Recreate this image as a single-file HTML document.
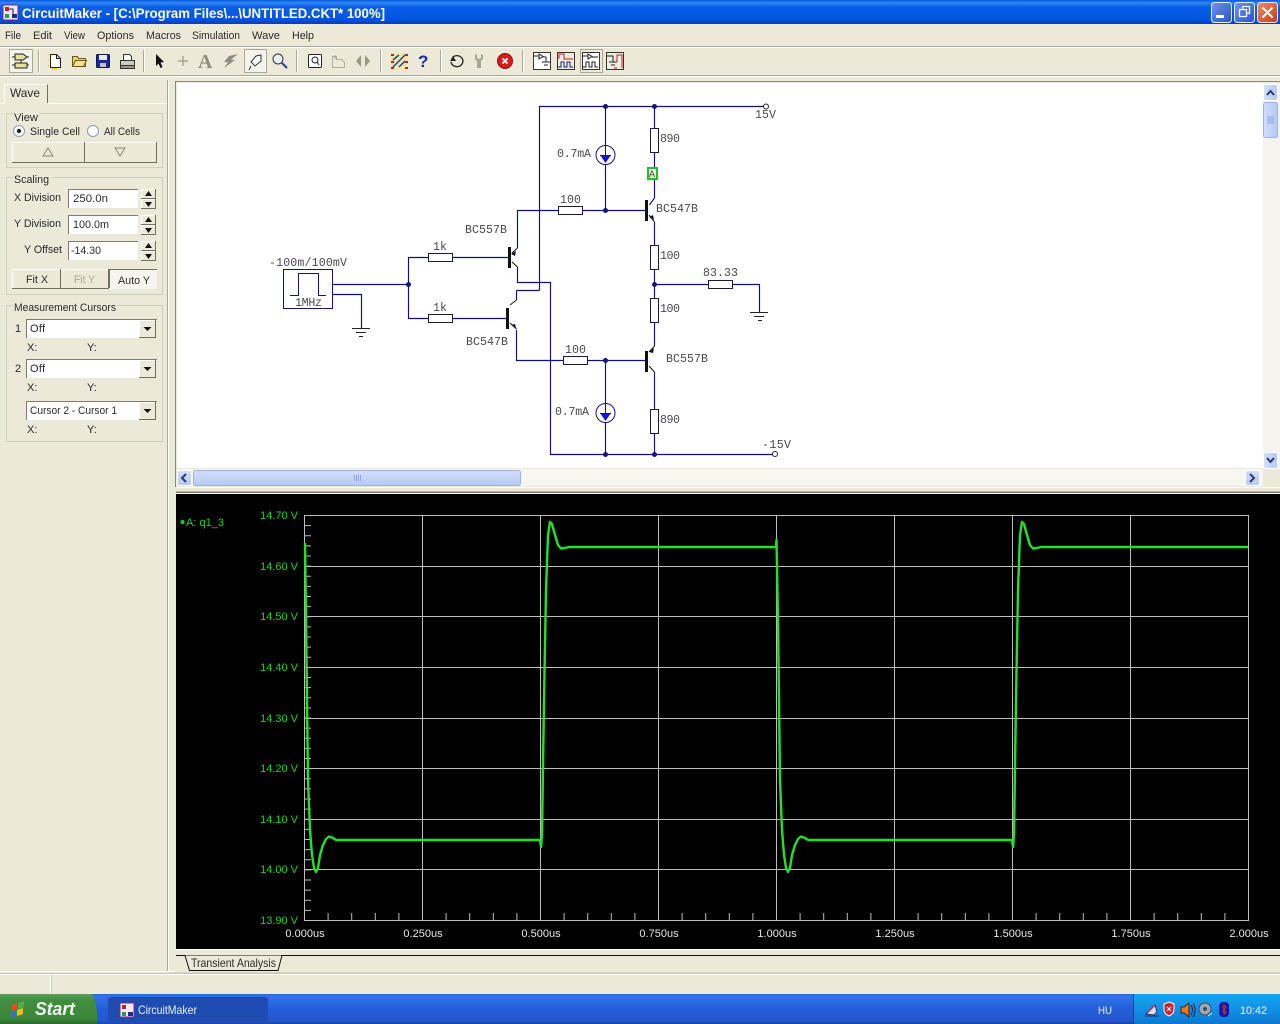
<!DOCTYPE html>
<html><head><meta charset="utf-8"><title>CircuitMaker</title>
<style>
html,body{margin:0;padding:0;background:#ece9d8;overflow:hidden}
svg{display:block;position:absolute;left:0;top:0}
text{font-family:"Liberation Sans",sans-serif;font-size:11px;fill:#2a2a2a}
.m text,text.m{font-family:"Liberation Mono",monospace;font-size:11.6px;fill:#4a4a4a}
.g,.g text{fill:#1fd21f}
.w,.w text{fill:#e8e8e8}
.gb{fill:none;stroke:#d0d0bf}
.wire{fill:none;stroke:#10107a;stroke-width:1.15}
.blk{fill:none;stroke:#111;stroke-width:1}
.grid{fill:none;stroke:#bdbdbd;stroke-width:1}
.res{fill:#fff;stroke:#1a1a3a;stroke-width:1}
.dot{fill:#14147c}
.btn{fill:#ece9d8;stroke:none}
.inp{fill:#fff;stroke:none}
.hi{fill:none;stroke:#fff}
.lo{fill:none;stroke:#716f64}
.sk{fill:none;stroke:#7f7c6e}
</style></head><body>
<svg width="1280" height="1024" viewBox="0 0 1280 1024" xmlns="http://www.w3.org/2000/svg">
<defs>
<linearGradient id="tb" x1="0" y1="0" x2="0" y2="1"><stop offset="0" stop-color="#0a5be0"/><stop offset=".12" stop-color="#2f87f5"/><stop offset=".28" stop-color="#0a5fe6"/><stop offset=".8" stop-color="#0454e2"/><stop offset="1" stop-color="#0340b8"/></linearGradient>
<linearGradient id="bb" x1="0" y1="0" x2="1" y2="1"><stop offset="0" stop-color="#6f96ec"/><stop offset="1" stop-color="#2a51c4"/></linearGradient>
<linearGradient id="rb" x1="0" y1="0" x2="1" y2="1"><stop offset="0" stop-color="#ea8e6e"/><stop offset="1" stop-color="#c63a14"/></linearGradient>
<linearGradient id="tk" x1="0" y1="0" x2="0" y2="1"><stop offset="0" stop-color="#2a6cdc"/><stop offset=".1" stop-color="#2f74e6"/><stop offset=".5" stop-color="#245edb"/><stop offset=".9" stop-color="#2456cc"/><stop offset="1" stop-color="#1b43a8"/></linearGradient>
<linearGradient id="st" x1="0" y1="0" x2="0" y2="1"><stop offset="0" stop-color="#5c9e5c"/><stop offset=".2" stop-color="#3f8f3f"/><stop offset=".8" stop-color="#3c873c"/><stop offset="1" stop-color="#2a6a2a"/></linearGradient>
<linearGradient id="tr" x1="0" y1="0" x2="0" y2="1"><stop offset="0" stop-color="#18a6ee"/><stop offset=".5" stop-color="#1190e8"/><stop offset="1" stop-color="#0d78d0"/></linearGradient>
<linearGradient id="sc" x1="0" y1="0" x2="0" y2="1"><stop offset="0" stop-color="#d3defa"/><stop offset="1" stop-color="#b6c9f6"/></linearGradient>
<linearGradient id="sc2" x1="0" y1="0" x2="1" y2="0"><stop offset="0" stop-color="#d3defa"/><stop offset="1" stop-color="#b6c9f6"/></linearGradient>
</defs>

<!-- title bar -->
<rect width="1280" height="24" fill="url(#tb)"/>
<rect x="3" y="5" width="15" height="15" fill="#f2e8f6" stroke="#7a2a90"/>
<rect x="5" y="7" width="4" height="4" fill="#c02020"/><rect x="12" y="14" width="5" height="4" fill="#1a2a90"/><rect x="5" y="14" width="4" height="4" fill="#20a040"/><path d="M9 9h4v5" fill="none" stroke="#1a1a80"/>
<text x="22" y="18" textLength="363" lengthAdjust="spacingAndGlyphs" style="font-size:14px;font-weight:bold;fill:#fff">CircuitMaker - [C:\Program Files\...\UNTITLED.CKT* 100%]</text>
<rect x="1211.5" y="2.5" width="20" height="20" rx="3" fill="url(#bb)" stroke="#e8eefc"/>
<rect x="1216" y="15" width="8" height="3" fill="#fff"/>
<rect x="1234.5" y="2.5" width="20" height="20" rx="3" fill="url(#bb)" stroke="#e8eefc"/>
<path d="M1242.5 6.5h7v7h-2.500M1242.500 6.500v2M1239.500 9.500h7v7h-7z" fill="none" stroke="#fff" stroke-width="1.300"/>
<rect x="1257.500" y="2.500" width="20" height="20" rx="3" fill="url(#rb)" stroke="#f4e8e4"/>
<path d="M1262.500 7.500l10 10M1272.500 7.500l-10 10" stroke="#fff" stroke-width="2"/>

<!-- menu -->
<g>
<text x="5" y="39" textLength="16" lengthAdjust="spacingAndGlyphs">File</text>
<text x="33" y="39" textLength="19" lengthAdjust="spacingAndGlyphs">Edit</text>
<text x="64" y="39" textLength="21" lengthAdjust="spacingAndGlyphs">View</text>
<text x="97" y="39" textLength="37" lengthAdjust="spacingAndGlyphs">Options</text>
<text x="146" y="39" textLength="35" lengthAdjust="spacingAndGlyphs">Macros</text>
<text x="192" y="39" textLength="48" lengthAdjust="spacingAndGlyphs">Simulation</text>
<text x="252" y="39" textLength="28" lengthAdjust="spacingAndGlyphs">Wave</text>
<text x="292" y="39" textLength="22" lengthAdjust="spacingAndGlyphs">Help</text>
</g>
<path d="M0 46.500H1280" stroke="#a9a797"/><path d="M0 47.500H1280" stroke="#fff"/>
<path d="M0 75.500H1280" stroke="#a9a797"/><path d="M0 76.500H1280" stroke="#fff"/>

<!-- toolbar -->
<path d="M38.500 50v22M143.500 50v22M296.500 50v22M380.500 50v22M440.500 50v22M522.500 50v22" stroke="#aca899"/>
<path d="M39.500 50v22M144.500 50v22M297.500 50v22M381.500 50v22M441.500 50v22M523.500 50v22" stroke="#fff"/>
<rect x="9.500" y="49.500" width="23" height="23" fill="#f5f4ec" stroke="#aca899"/>
<path d="M15 54h8l4 3-4 3h-8zM15 63h12v5H15z" fill="#e4e098" stroke="#222"/>
<path d="M12 57h3M27 57h2M12 65h3M27 65h2M21 60v3" stroke="#222"/>
<!-- new -->
<path d="M50.500 54.500h6l4 4v9h-10z" fill="#fff" stroke="#222"/><path d="M56.500 54.500v4h4" fill="none" stroke="#222"/><path d="M49 54h-1M49 60h-1M49 66h-1M52 69h6" stroke="#e8e020" stroke-width="2"/>
<!-- open -->
<path d="M72.500 66.500v-10h5l1 2h7v8z" fill="#e8d070" stroke="#6a5a20"/><path d="M72.500 66.500l3-6h11l-3 6z" fill="#f4e090" stroke="#6a5a20"/>
<!-- save -->
<rect x="96.500" y="54.500" width="13" height="13" rx="1" fill="#1c2a90" stroke="#101850"/><rect x="99" y="55" width="8" height="5" fill="#e8e8f4"/><rect x="100" y="63" width="6" height="4" fill="#c0c0d0"/>
<!-- print -->
<path d="M123.500 54.500h6l2 2v5h-8z" fill="#fff" stroke="#333"/><rect x="120.500" y="60.500" width="14" height="5" fill="#cfccbd" stroke="#333"/><rect x="120.500" y="65.500" width="14" height="3" fill="#9a9888" stroke="#333"/>
<!-- arrow -->
<path d="M156 54l8 8-3.500.5 2 4.500-2 1-2-4.500-2.500 2.500z" fill="#111"/>
<!-- plus -->
<path d="M183 56v10M178 61h10" stroke="#a8a698" stroke-width="1.500"/>
<!-- A -->
<text x="198" y="68" style="font-family:'Liberation Serif',serif;font-size:20px;font-weight:bold;fill:#8e8c80">A</text>
<!-- bolt -->
<path d="M238 54l-9 2-5 6 4 0-4 6 11-8-4-.5z" fill="#8e8c80"/>
<!-- probe -->
<rect x="244.500" y="49.500" width="22" height="23" fill="#f5f4ec" stroke="#aca899"/>
<path d="M261 55l-5 1-5 6 4 4 6-5zM251 66l-2 4" fill="#fff" stroke="#333"/>
<!-- magnifier -->
<circle cx="278" cy="59" r="5" fill="#e8f0f8" stroke="#333"/><path d="M282 63l5 5" stroke="#2040a0" stroke-width="2"/>
<!-- zoom rect -->
<rect x="308.500" y="54.500" width="13" height="13" rx="1" fill="#fff" stroke="#222"/><circle cx="315" cy="60" r="3" fill="none" stroke="#222"/><path d="M317 62l2 3" stroke="#222"/>
<path d="M332.500 67.500v-11h4v3l5 0 3 3v5z" fill="none" stroke="#b0ae9e"/><path d="M335 55v4" stroke="#a09e8e"/>
<path d="M361 55v12l-5-6zM365 55v12l5-6z" fill="#9a9888"/>
<!-- netlist -->
<rect x="391" y="53" width="16" height="16" fill="#f4e8a0"/>
<path d="M393 67l12-12M393 60l6-5M399 67l6-6" stroke="#2040a0" stroke-width="1.500"/><path d="M391 55h3M391 62h3M391 68h3M405 55h3M405 62h3M405 68h3" stroke="#c02020" stroke-width="2"/>
<text x="418" y="67" style="font-size:17px;font-weight:bold;fill:#1a2ab0">?</text>
<!-- undo -->
<path d="M453 57a6 5.500 0 1 1-2 5" fill="none" stroke="#222" stroke-width="1.300"/><path d="M450 61h6l-3-5z" fill="#222"/>
<!-- wrench -->
<path d="M477 54v4l2 1 2-1v-4l2 1v4l-2 2v7h-4v-7l-2-2v-4z" fill="#a8a698"/>
<!-- stop -->
<circle cx="505" cy="61" r="7.500" fill="#d81c1c" stroke="#901010"/><path d="M502.500 58.500l5 5M507.500 58.500l-5 5" stroke="#fff" stroke-width="1.800"/>
<!-- panels -->
<g fill="#fff" stroke="#333">
<rect x="533.500" y="52.500" width="17" height="17"/><rect x="557.500" y="52.500" width="17" height="17" fill="#f0ece0"/><rect x="582.500" y="52.500" width="17" height="17"/><rect x="606.500" y="52.500" width="17" height="17" fill="#f0ece0"/>
</g>
<rect x="580.500" y="49.500" width="22" height="23" fill="none" stroke="#aca899"/>
<path d="M534 56h5M539 54v5l4-2.500-4-2.500zM543 57h3v5M542 62h8M544 65h4" fill="none" stroke="#222"/>
<path d="M559 59v-5h5v5h9" fill="none" stroke="#c02020"/><path d="M558 67h3v-5h3v5h3v-5h3v5h3" fill="none" stroke="#1a2080"/>
<path d="M583 56h5M588 54v5l4-2.500-4-2.500zM592 57h6" fill="none" stroke="#222"/><path d="M583 67h3v-5h3v5h3v-5h3v5h3" fill="none" stroke="#222"/>
<path d="M607 56h6v6M609 62h8M611 65h4" fill="none" stroke="#222"/><path d="M617 62v-7h5v13M614 68h3" fill="none" stroke="#c02020"/>

<!-- left panel -->
<path d="M167.500 80V972" stroke="#aca899"/><path d="M168.500 80V972" stroke="#fff"/>
<path d="M0.500 103.500H4.500M48.500 103.500H167" stroke="#fff"/>
<path d="M4.500 103.500V84.500H47.500V103" fill="#ece9d8" stroke="#fff"/><path d="M47.500 84.500V103" stroke="#716f64"/>
<text x="10" y="97" textLength="30" lengthAdjust="spacingAndGlyphs" style="font-size:12px">Wave</text>

<g class="gb">
<rect x="6.500" y="113.500" width="156" height="54"/>
<rect x="6.500" y="177.500" width="156" height="117"/>
<rect x="6.500" y="305.500" width="156" height="136"/>
</g>
<rect x="13" y="110" width="26" height="10" fill="#ece9d8"/><text x="14" y="121" textLength="24" lengthAdjust="spacingAndGlyphs">View</text>
<rect x="13" y="173" width="38" height="10" fill="#ece9d8"/><text x="14" y="183" textLength="35" lengthAdjust="spacingAndGlyphs">Scaling</text>
<rect x="13" y="301" width="104" height="10" fill="#ece9d8"/><text x="14" y="311" textLength="102" lengthAdjust="spacingAndGlyphs">Measurement Cursors</text>

<circle cx="19" cy="131" r="5.500" fill="#fff" stroke="#8d9aa8"/><circle cx="19" cy="131" r="2.200" fill="#222"/>
<text x="30" y="135" textLength="50" lengthAdjust="spacingAndGlyphs">Single Cell</text>
<circle cx="93" cy="131" r="5.500" fill="#fff" stroke="#8d9aa8"/>
<text x="104" y="135" textLength="36" lengthAdjust="spacingAndGlyphs">All Cells</text>
<!-- raised buttons -->
<path class="hi" d="M12.500 162V142.500H84M84.500 162V142.500H156M12.500 288V269.500H60M60.500 288V269.500H108
M141.500 198V189.500H155M141.500 208V199.500H155M141.500 224V215.500H155M141.500 234V225.500H155M141.500 250V241.500H155M141.500 260V251.500H155
M139.500 337V320.500H155M139.500 377V360.500H155M139.500 419V402.500H155"/>
<path class="lo" d="M12 162.500H84.500V142M84 162.500H156.500V142M12 288.500H60.500V269M60 288.500H108.500V269
M141 198.500H155.500V189M141 208.500H155.500V199M141 224.500H155.500V215M141 234.500H155.500V225M141 250.500H155.500V241M141 260.500H155.500V251
M139 337.500H155.500V320M139 377.500H155.500V360M139 419.500H155.500V402"/>
<path d="M48 148l5 8h-10z" fill="none" stroke="#8a8878"/><path d="M120 156l5-8h-10z" fill="none" stroke="#8a8878"/>

<text x="14" y="201" textLength="47" lengthAdjust="spacingAndGlyphs">X Division</text>
<text x="14" y="227" textLength="47" lengthAdjust="spacingAndGlyphs">Y Division</text>
<text x="24" y="253" textLength="38" lengthAdjust="spacingAndGlyphs">Y Offset</text>
<rect x="68" y="189" width="70" height="19" class="inp"/><path class="sk" d="M68.500 208V189.500H138"/><text x="73" y="202" textLength="35" lengthAdjust="spacingAndGlyphs">250.0n</text>
<rect x="68" y="215" width="70" height="19" class="inp"/><path class="sk" d="M68.500 234V215.500H138"/><text x="73" y="228" textLength="36" lengthAdjust="spacingAndGlyphs">100.0m</text>
<rect x="68" y="241" width="70" height="19" class="inp"/><path class="sk" d="M68.500 260V241.500H138"/><text x="71" y="254" textLength="30" lengthAdjust="spacingAndGlyphs">-14.30</text>
<path d="M148.500 191l3.500 5h-7zM148.500 207l3.500-5h-7zM148.500 217l3.500 5h-7zM148.500 233l3.500-5h-7zM148.500 243l3.500 5h-7zM148.500 259l3.500-5h-7z" fill="#111"/>
<rect x="109" y="269" width="48" height="20" fill="#f6f5ee"/><path class="lo" d="M109.500 288V269.500H157"/>
<text x="26" y="283" textLength="22" lengthAdjust="spacingAndGlyphs">Fit X</text><text x="74" y="283" textLength="21" lengthAdjust="spacingAndGlyphs" style="fill:#aca899">Fit Y</text><text x="118" y="284" textLength="32" lengthAdjust="spacingAndGlyphs">Auto Y</text>

<text x="15" y="332">1</text><text x="15" y="372">2</text>
<rect x="26" y="319" width="113" height="19" class="inp"/><path class="sk" d="M26.500 338V319.500H157"/><text x="30" y="332" textLength="15">Off</text>
<rect x="26" y="359" width="113" height="19" class="inp"/><path class="sk" d="M26.500 378V359.500H157"/><text x="30" y="372" textLength="15">Off</text>
<rect x="26" y="401" width="113" height="19" class="inp"/><path class="sk" d="M26.500 420V401.500H157"/><text x="30" y="414" textLength="87" lengthAdjust="spacingAndGlyphs">Cursor 2 - Cursor 1</text>
<path d="M143.500 327h8l-4 4zM143.500 367h8l-4 4zM143.500 409h8l-4 4z" fill="#111"/>
<text x="27" y="351">X:</text><text x="87" y="351">Y:</text>
<text x="27" y="391">X:</text><text x="87" y="391">Y:</text>
<text x="27" y="433">X:</text><text x="87" y="433">Y:</text>

<!-- canvas -->
<rect x="176" y="82" width="1104" height="406" fill="#ece9d8"/>
<rect x="177" y="83" width="1086" height="385" fill="#fff"/>
<path d="M175.500 487V81.500H1280" fill="none" stroke="#8d8a7d"/>
<rect x="1263" y="83" width="17" height="386" fill="#f4f3ee"/>
<rect x="1263.500" y="84.500" width="14" height="16" rx="2" fill="url(#sc2)" stroke="#fff"/>
<path d="M1267 95l3.500-4 3.500 4" fill="none" stroke="#2a3a70" stroke-width="2"/>
<rect x="1263.500" y="102.500" width="14" height="35" rx="2" fill="url(#sc2)" stroke="#9db3e8"/>
<path d="M1267 117h7M1267 119h7M1267 121h7M1267 123h7" stroke="#8ea4dc"/>
<rect x="1263.500" y="452.500" width="14" height="16" rx="2" fill="url(#sc2)" stroke="#fff"/>
<path d="M1267 458l3.500 4 3.500-4" fill="none" stroke="#2a3a70" stroke-width="2"/>
<rect x="177" y="469" width="1086" height="17" fill="#f7f6f1"/>
<rect x="177.500" y="470.500" width="14" height="15" rx="2" fill="url(#sc)" stroke="#fff"/>
<path d="M186 474l-4 4 4 4" fill="none" stroke="#2a3a70" stroke-width="2"/>
<rect x="193.500" y="470.500" width="327" height="15" rx="2" fill="url(#sc)" stroke="#9db3e8"/>
<path d="M354.500 475v6M356.500 475v6M358.500 475v6M360.500 475v6" stroke="#8ea4dc"/>
<rect x="1245.500" y="470.500" width="14" height="15" rx="2" fill="url(#sc)" stroke="#fff"/>
<path d="M1250 474l4 4-4 4" fill="none" stroke="#2a3a70" stroke-width="2"/>
<path d="M176 487.500H1280" stroke="#fff"/><path d="M176 491.500H1280" stroke="#b8b5a4"/><path d="M176 492.500H1280" stroke="#7a776a"/><path d="M176 493.500H1280" stroke="#fff"/>

<!-- circuit -->
<g class="wire">
<path d="M539.500 290.500V106.500H765"/>
<path d="M605.500 106.500V146M605.500 164V210.500"/>
<path d="M654.500 106.500V128M654.500 152V167M654.500 180V198L649.500 205"/>
<path d="M583 210.500H646"/>
<path d="M517 210.500H558"/>
<path d="M517.500 210.500V248"/>
<path d="M654.500 222V245M654.500 269V298M654.500 323V346"/>
<path d="M654.500 372V409M654.500 433V454"/>
<path d="M654.500 284.500H708M733 284.500H759.500V312"/>
<path d="M333 284.500H408.500M333 294.500H361.500V328"/>
<path d="M428 257.500H408.500V318.500H428"/>
<path d="M453 257.500H509M453 318.500H507"/>
<path d="M517.500 267V282.500H550.500V454.500H773"/>
<path d="M516.500 290.500H539.500M516.500 290.500V300"/>
<path d="M516.500 330V360.500H563M588 360.500H646"/>
<path d="M605.500 360.500V404M605.500 423V454"/>
</g>
<g class="blk">
<path d="M512 253L517.500 248M512 262L517.500 267"/>
<path d="M510 305L516.500 300M510 323L516.500 329"/>
<path d="M649 215L654.500 222M649 352L654.500 346M649 366L654.500 372"/>
</g>
<g fill="#111">
<rect x="508" y="247" width="3" height="21"/><rect x="506" y="308" width="3" height="21"/>
<rect x="645" y="200" width="3" height="21"/><rect x="645" y="351" width="3" height="21"/>
<path d="M511 254l5-3-1 5zM516 328l-5-3 4-1zM654 220l-5-3 4-2zM649 352l5-4-1 5z"/>
</g>
<g class="res">
<rect x="428.500" y="253.500" width="24" height="8"/><rect x="428.500" y="314.500" width="24" height="8"/>
<rect x="558.500" y="206.500" width="24" height="8"/><rect x="563.500" y="356.500" width="24" height="8"/>
<rect x="708.500" y="280.500" width="24" height="8"/>
<rect x="650.500" y="128.500" width="8" height="24"/><rect x="650.500" y="245.500" width="8" height="24"/>
<rect x="650.500" y="298.500" width="8" height="24"/><rect x="650.500" y="409.500" width="8" height="24"/>
</g>
<g class="dot">
<circle cx="408.500" cy="284.500" r="2.500"/><circle cx="605.500" cy="106.500" r="2.500"/><circle cx="654.500" cy="106.500" r="2.500"/>
<circle cx="605.500" cy="210.500" r="2.500"/><circle cx="654.500" cy="284.500" r="2.500"/><circle cx="605.500" cy="360.500" r="2.500"/>
<circle cx="605.500" cy="454.500" r="2.500"/><circle cx="654.500" cy="454.500" r="2.500"/>
</g>
<circle cx="766" cy="106.500" r="2.500" fill="#fff" stroke="#222"/><circle cx="775" cy="454" r="2.500" fill="#fff" stroke="#222"/>
<circle cx="605.500" cy="155" r="9.500" fill="#fff" stroke="#14147c"/><path d="M600 155h11l-5.500 8z" fill="#1414e0"/><path d="M605.500 146v9M600 155.500h11" stroke="#14147c"/>
<circle cx="605.500" cy="413" r="9.500" fill="#fff" stroke="#14147c"/><path d="M600 413h11l-5.500 8z" fill="#1414e0"/><path d="M605.500 404v9M600 413.500h11" stroke="#14147c"/>
<rect x="283.500" y="269.500" width="49" height="39" fill="#fff" stroke="#14147c"/>
<path d="M290 295.500h8.500V273.500H318.500V295.500H326" fill="none" stroke="#14147c"/>
<path d="M352 328.500h18M356 332.500h10M359 336.500h4M750 312.500h18M754 316.500h10M758 320.500h4" stroke="#222"/>
<rect x="648" y="168" width="9" height="11" fill="#e8f8e0" stroke="#20c020" stroke-width="2"/>
<text class="m" x="649" y="177" style="font-size:10px;fill:#444">A</text>
<g class="m">
<text x="755" y="118" textLength="21">15V</text>
<text x="762" y="448" textLength="29">-15V</text>
<text x="269" y="266" textLength="78">-100m/100mV</text>
<text x="295" y="306" textLength="27">1MHz</text>
<text x="433" y="250" textLength="14">1k</text>
<text x="433" y="311" textLength="14">1k</text>
<text x="465" y="233" textLength="42">BC557B</text>
<text x="466" y="345" textLength="42">BC547B</text>
<text x="656" y="212" textLength="42">BC547B</text>
<text x="666" y="362" textLength="42">BC557B</text>
<text x="560" y="203" textLength="21">100</text>
<text x="565" y="353" textLength="21">100</text>
<text x="660" y="142" textLength="20">890</text>
<text x="660" y="259" textLength="20">100</text>
<text x="660" y="312" textLength="20">100</text>
<text x="660" y="423" textLength="20">890</text>
<text x="703" y="276" textLength="35">83.33</text>
<text x="557" y="157" textLength="34">0.7mA</text>
<text x="555" y="415" textLength="34">0.7mA</text>
</g>

<!-- graph -->
<rect x="176" y="494" width="1104" height="455" fill="#000"/>
<g class="grid">
<rect x="304.500" y="515.500" width="944" height="405"/>
<path d="M422.500 515V920M540.500 515V920M658.500 515V920M776.500 515V920M894.500 515V920M1012.500 515V920M1130.500 515V920"/>
<path d="M304 566.500H1248M304 616.500H1248M304 667.500H1248M304 718.500H1248M304 768.500H1248M304 819.500H1248M304 869.500H1248"/>
<path d="M307.500 515V920" stroke-width="7" stroke-dasharray="1 9.125"/>
<path d="M304 916.500H1248" stroke-width="7" stroke-dasharray="1 22.600"/>
</g>
<path fill="none" stroke="#26e026" stroke-width="2.400" stroke-linejoin="round" d="M305 543L306 620L308 780L310 830L312 855L314 868L316 872L318 868L320 855L323 845L326 839L329 836.500L333 838L336 840L540 840L541 847L542 835L544 700L546 590L548 535L550 522L552 524L555 535L558 545L561 548.500L565 548L569 547L776 547L776.500 540L778 620L780 780L782 830L784 855L786 868L788 872L790 868L792 855L795 845L798 839L801 836.500L805 838L808 840L1012 840L1013 847L1014 835L1016 700L1018 590L1020 535L1022 522L1024 524L1027 535L1030 545L1033 548.500L1037 548L1041 547L1248 547"/>
<circle cx="182.500" cy="522" r="2" fill="#1fd21f"/>
<g class="g"><text x="186" y="526" textLength="38" lengthAdjust="spacingAndGlyphs">A: q1_3</text></g>
<g class="g" text-anchor="end">
<text x="298" y="519">14.70 V</text><text x="298" y="570">14.60 V</text><text x="298" y="620">14.50 V</text><text x="298" y="671">14.40 V</text><text x="298" y="722">14.30 V</text><text x="298" y="772">14.20 V</text><text x="298" y="823">14.10 V</text><text x="298" y="873">14.00 V</text><text x="298" y="924">13.90 V</text>
</g>
<g class="w" text-anchor="middle">
<text x="305" y="937">0.000us</text><text x="423" y="937">0.250us</text><text x="541" y="937">0.500us</text><text x="659" y="937">0.750us</text><text x="777" y="937">1.000us</text><text x="895" y="937">1.250us</text><text x="1013" y="937">1.500us</text><text x="1131" y="937">1.750us</text><text x="1249" y="937">2.000us</text>
</g>

<!-- tabs -->
<path d="M176 949.500H1280" stroke="#fff"/>
<path d="M176 955.500H1280" stroke="#111"/>
<path d="M185 955.500L189.500 970.500H278L282 955.500z" fill="#ece9d8"/>
<path d="M185 955.500L189.500 970.500H278L282 955.500" fill="none" stroke="#111"/>
<text x="191" y="967" textLength="85" lengthAdjust="spacingAndGlyphs" style="font-size:12px">Transient Analysis</text>

<!-- status -->
<path d="M0 971.500H175" stroke="#fff"/>
<path d="M169 972.500H1280" stroke="#d8d5c5"/><path d="M0 973.500H1280" stroke="#c9c6b6"/><path d="M0 974.500H1280" stroke="#fff"/>
<path d="M50.500 975V993" stroke="#fff"/><path d="M51.500 975V993" stroke="#c9c6b6"/>

<!-- taskbar -->
<rect x="0" y="994" width="1280" height="30" fill="url(#tk)"/>
<path d="M0 994H92Q98 1004 97 1024H0z" fill="url(#st)"/>
<path d="M12 1005l5-2v6l-5 2z" fill="#e05020"/><path d="M18 1003l6-2v6l-6 2z" fill="#50b040"/><path d="M11 1012l5-2v6l-5 2z" fill="#3070d8"/><path d="M17 1010l6-2v6l-6 2z" fill="#e8c020"/>
<text x="35" y="1015" textLength="40" lengthAdjust="spacingAndGlyphs" style="font-size:18px;font-weight:bold;font-style:italic;fill:#f4f8f0">Start</text>
<rect x="108" y="997" width="160" height="25" rx="3" fill="#1e4cb0"/>
<rect x="120" y="1003" width="14" height="14" fill="#f2e8f6" stroke="#7a2a90"/><rect x="122" y="1005" width="4" height="4" fill="#c02020"/><rect x="128" y="1012" width="5" height="4" fill="#1a2a90"/><rect x="122" y="1012" width="4" height="4" fill="#20a040"/>
<text x="138" y="1014" textLength="59" lengthAdjust="spacingAndGlyphs" style="fill:#e8eef8;font-size:12px">CircuitMaker</text>
<text x="1098" y="1014" textLength="14" lengthAdjust="spacingAndGlyphs" style="fill:#e8eef8">HU</text>
<rect x="1134" y="994" width="146" height="30" fill="url(#tr)"/>
<path d="M1133.500 994V1024" stroke="#0d4aa0"/>
<path d="M1146 1014l9-9 2 7-3 3zM1145 1016h14" fill="#d8e0f0" stroke="#203070"/><path d="M1148 1012l7-7" stroke="#e02020" stroke-width="1.500"/>
<path d="M1169 1002l5 2v5q0 5-5 7q-5-2-5-7v-5z" fill="#d02030" stroke="#fff"/><path d="M1167 1007l4 4M1171 1007l-4 4" stroke="#fff"/>
<path d="M1181 1007h3l5-4v14l-5-4h-3z" fill="#e87820" stroke="#402010"/><path d="M1191 1005q3 5 0 10M1193 1003q4 7 0 14" fill="none" stroke="#102040"/>
<circle cx="1205" cy="1009" r="6" fill="#a0a8b0" stroke="#405060"/><circle cx="1205" cy="1009" r="2" fill="#405060"/><path d="M1208 1016l4-3" stroke="#d8e8f8"/>
<rect x="1219" y="1002" width="10" height="15" rx="4" fill="#1018a0"/><path d="M1224 1004v11M1222 1006l4 6-2 2M1222 1012l4-5-2-2" fill="none" stroke="#e02040"/>
<text x="1240" y="1014" textLength="27" lengthAdjust="spacingAndGlyphs" style="fill:#f0f6fc">10:42</text>
</svg>
</body></html>
